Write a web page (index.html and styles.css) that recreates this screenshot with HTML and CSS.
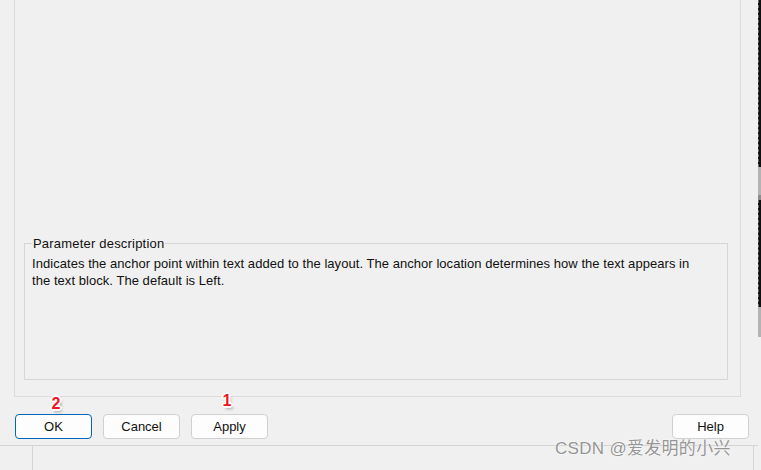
FILE: index.html
```html
<!DOCTYPE html>
<html lang="en">
<head>
    <meta charset="UTF-8">
    <meta name="viewport" content="width=device-width, initial-scale=1.0">
    <title>Parameter description</title>
    <link rel="stylesheet" href="styles.css">
</head>
<body>
    <div class="window">
        <div class="dialog">
            <div class="panel">
                <fieldset class="group">
                    <legend>Parameter description</legend>
                    <p class="desc">Indicates the anchor point within text added to the layout. The anchor location determines how the text appears in the text block. The default is Left.</p>
                </fieldset>
            </div>
            <div class="buttons">
                <button type="button" class="btn btn-default">OK<span class="badge badge-ok">2</span></button>
                <button type="button" class="btn">Cancel</button>
                <button type="button" class="btn">Apply<span class="badge badge-apply">1</span></button>
                <button type="button" class="btn btn-help">Help</button>
            </div>
            <div class="statusbar">
                <div class="status-cell status-first"></div>
                <div class="status-cell status-main"></div>
                <div class="status-cell status-last"></div>
            </div>
        </div>
        <!-- edge of the window behind -->
        <div class="edge">
            <div class="edge-dark edge-top"></div>
            <div class="edge-grey edge-mid"></div>
            <div class="edge-dark edge-lower"></div>
            <div class="edge-grey edge-end"></div>
        </div>
        <div class="watermark">CSDN @爱发明的小兴</div>
    </div>
</body>
</html>
```

FILE: styles.css
```css
/* Dialog lower half: description box and buttons */
html, body {
    margin: 0;
    background-color: #f0f0f0;
}
body {
    font-family: "Liberation Sans", Arial, sans-serif;
    font-size: 13px;
    color: #000000;
}
.window {
    position: relative;
    display: flex;
    width: 761px;
    height: 470px;
    overflow: hidden;
}
.dialog {
    width: 758px;
    display: flex;
    flex-direction: column;
}
.panel {
    box-sizing: border-box;
    width: 727px;
    height: 397px;
    margin-left: 14px;
    padding-bottom: 16px;
    border: 1px solid #dcdcdc;
    border-top: none;
    display: flex;
    flex-direction: column;
    justify-content: flex-end;
}
.group {
    margin: 0 12px 0 9px;
    padding: 4px 27px 0 7px;
    border: 1px solid #d6d6d6;
    min-width: 0;
}
.group legend {
    padding: 0 1px;
    font-size: 13px;
    line-height: 15px;
    letter-spacing: 0.2px;
    color: #111111;
}
.desc {
    margin: 0;
    height: 124px;
    line-height: 17px;
    letter-spacing: 0.05px;
    color: #111111;
}
.buttons {
    box-sizing: border-box;
    height: 48px;
    padding: 17px 9px 0 15px;
    display: flex;
    align-items: flex-start;
    gap: 11px;
}
.btn {
    position: relative;
    width: 77px;
    height: 25px;
    padding: 0;
    border: 1px solid #d0d0d0;
    border-radius: 4px;
    background-color: #fdfdfd;
    font-family: inherit;
    font-size: 13px;
    color: #111111;
}
.btn-default {
    border-color: #0067c0;
}
.btn-help {
    margin-left: auto;
}
.badge {
    position: absolute;
    width: 16px;
    text-align: center;
    font-size: 16px;
    line-height: 16px;
    font-weight: bold;
    color: #f0141e;
    text-shadow: 1px 0 #fff, -1px 0 #fff, 0 1px #fff, 0 -1px #fff,
        2px 0 #fff, -2px 0 #fff, 0 2px #fff, 0 -2px #fff,
        1px 1px #fff, -1px -1px #fff, 1px -1px #fff, -1px 1px #fff,
        2px 3px 3px rgba(0,0,0,0.35);
}
.badge-ok {
    top: -19px;
    left: 32px;
}
.badge-apply {
    top: -22px;
    left: 27px;
}
.statusbar {
    flex: 1;
    display: flex;
    border-top: 1px solid #d4d4d4;
}
.status-first {
    width: 32px;
    border-right: 1px solid #d4d4d4;
}
.status-main {
    flex: 1;
}
.status-last {
    width: 5px;
    box-sizing: border-box;
    border-left: 1px solid #d4d4d4;
}
.edge {
    width: 3px;
    display: flex;
    flex-direction: column;
}
.edge-dark {
    background-color: #101010;
    border-left: 1px dashed #6a6a6a;
}
.edge-grey {
    background-color: #b3b3b3;
}
.edge-top {
    height: 167px;
}
.edge-mid {
    height: 33px;
    border-bottom: 5px solid #8c8c8c;
    box-sizing: border-box;
}
.edge-lower {
    height: 107px;
}
.edge-end {
    height: 30px;
}
.watermark {
    position: absolute;
    left: 555px;
    top: 439px;
    font-family: "Liberation Sans", "Noto Sans CJK SC", sans-serif;
    font-size: 17px;
    line-height: 20px;
    letter-spacing: 0.3px;
    color: #959595;
    text-shadow: 0 0 1px #fff, 0 0 2px #fff;
    white-space: nowrap;
}
```
